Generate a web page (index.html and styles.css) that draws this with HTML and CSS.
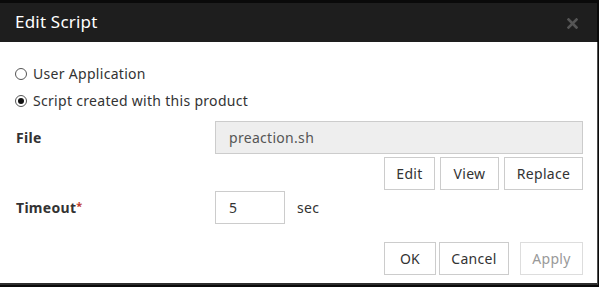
FILE: index.html
```html
<!DOCTYPE html>
<html lang="en">
<head>
  <meta charset="UTF-8">
  <title>Edit Script</title>
  <link rel="stylesheet" href="styles.css">
</head>
<body>
  <div class="dialog">
    <div class="dialog-header">
      <span class="dialog-title">Edit Script</span>
      <svg class="close-btn" width="11" height="11" viewBox="0 0 11 11">
        <path d="M1.5 1.5 L9.5 9.5 M9.5 1.5 L1.5 9.5" stroke="#555" stroke-width="2.6" stroke-linecap="square"/>
      </svg>
    </div>

    <div class="dialog-body">
      <div class="radio-row">
        <span class="radio"></span>
        <span>User Application</span>
      </div>
      <div class="radio-row">
        <span class="radio checked"></span>
        <span>Script created with this product</span>
      </div>

      <div class="form-row file-row">
        <label class="field-label">File</label>
        <div class="field">
          <div class="text-input readonly">preaction.sh</div>
        </div>
      </div>
      <div class="button-row file-buttons">
        <button class="btn edit-btn">Edit</button>
        <button class="btn view-btn">View</button>
        <button class="btn replace-btn">Replace</button>
      </div>

      <div class="form-row timeout-row">
        <label class="field-label">Timeout<span class="required">*</span></label>
        <div class="field">
          <div class="text-input small">5</div>
          <span class="unit">sec</span>
        </div>
      </div>

      <div class="button-row footer">
        <button class="btn ok-btn">OK</button>
        <button class="btn cancel-btn">Cancel</button>
        <button class="btn apply-btn" disabled>Apply</button>
      </div>
    </div>
  </div>
</body>
</html>
```

FILE: styles.css
```css
body {
  margin: 0;
  background-color: #0a0a0a;
  font-family: "Noto Sans", "Open Sans", Arial, sans-serif;
  font-size: 14px;
  letter-spacing: 0.3px;
  color: #333;
}

.dialog {
  width: 598px;
  margin-top: 3px;
}

.dialog-header {
  width: 597px;
  height: 39px;
  background-color: #1e1e1e;
  display: flex;
  align-items: center;
  justify-content: space-between;
  box-sizing: border-box;
  padding: 0 19px 0 15px;
}
.dialog-title {
  color: #fff;
  font-size: 17px;
  letter-spacing: 0.2px;
  margin-top: -2px;
}
.close-btn {
  margin-top: 2px;
}

.dialog-body {
  background-color: #fff;
  width: 598px;
  height: 243px;
  box-sizing: border-box;
  border-right: 1px solid #505050;
  border-bottom: 2px solid #2e2e2e;
  padding: 18px 14px 0 15px;
}

.radio-row {
  display: flex;
  align-items: center;
  height: 27px;
  gap: 6px;
}
.radio {
  width: 12px;
  height: 12px;
  border: 1px solid #555;
  border-radius: 50%;
  box-sizing: border-box;
  display: flex;
  align-items: center;
  justify-content: center;
}
.radio.checked::after {
  content: "";
  width: 6px;
  height: 6px;
  border-radius: 50%;
  background-color: #111;
}

.form-row {
  display: flex;
  align-items: center;
}
.file-row { margin-top: 7px; }
.timeout-row { margin-top: 1px; }

.field-label {
  width: 199px;
  font-weight: bold;
  padding-left: 1px;
}
.required {
  color: #c0392b;
  font-size: 11px;
  vertical-align: top;
}
.field {
  flex: 1;
  display: flex;
  align-items: center;
}

.text-input {
  height: 33px;
  box-sizing: border-box;
  border: 1px solid #ccc;
  padding: 0 13px;
  display: flex;
  align-items: center;
  flex: 1;
}
.text-input.readonly {
  background-color: #eeeeee;
  color: #555;
}
.text-input.small {
  flex: none;
  width: 70px;
}
.unit {
  margin-left: 12px;
}

.button-row {
  display: flex;
  justify-content: flex-end;
}
.file-buttons {
  margin-top: 3px;
  gap: 5px;
}
.footer {
  margin-top: 18px;
}

.btn {
  height: 33px;
  background-color: #fff;
  border: 1px solid #ccc;
  font-family: inherit;
  font-size: 14px;
  letter-spacing: 0.3px;
  color: #333;
  padding: 0;
  cursor: pointer;
}
.edit-btn { width: 51px; }
.view-btn { width: 59px; }
.replace-btn { width: 79px; }
.ok-btn { width: 52px; }
.cancel-btn { width: 70px; margin-left: 3px; }
.apply-btn {
  width: 63px;
  margin-left: 11px;
  color: #999;
  border-color: #ddd;
}
```
